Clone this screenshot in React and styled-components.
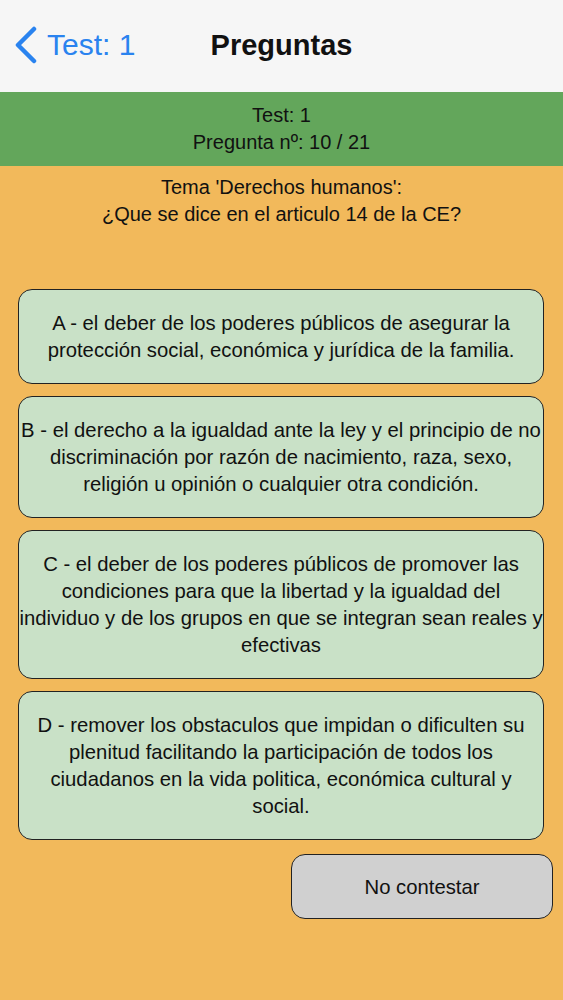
import React from "react";
import styled, { createGlobalStyle } from "styled-components";

const GlobalStyle = createGlobalStyle`
  html, body {
    margin: 0;
    padding: 0;
    background: #f2b95b;
  }
  body {
    font-family: "Liberation Sans", Arial, sans-serif;
    color: #111;
  }
`;

const answers = [
  [
    "A - el deber de los poderes públicos de asegurar la",
    "protección social, económica y jurídica de la familia.",
  ],
  [
    "B - el derecho a la igualdad ante la ley y el principio de no",
    "discriminación por razón de nacimiento, raza, sexo,",
    "religión u opinión o cualquier otra condición.",
  ],
  [
    "C - el deber de los poderes públicos de promover las",
    "condiciones para que la libertad y la igualdad del",
    "individuo y de los grupos en que se integran sean reales y",
    "efectivas",
  ],
  [
    "D - remover los obstaculos que impidan o dificulten su",
    "plenitud facilitando la participación de todos los",
    "ciudadanos en la vida politica, económica cultural y",
    "social.",
  ],
];

const Page = styled.div`
  width: 563px;
  min-height: 1000px;
  background: #f2b95b;
  display: flex;
  flex-direction: column;
`;

const NavBar = styled.header`
  height: 92px;
  background: #f6f6f6;
  display: grid;
  grid-template-columns: 1fr auto 1fr;
  align-items: center;
  padding-bottom: 2px;
  box-sizing: border-box;
`;

const BackButton = styled.button`
  justify-self: start;
  display: flex;
  align-items: center;
  gap: 10px;
  margin-left: 13px;
  padding: 0;
  border: none;
  background: none;
  color: #2a83ef;
  font-family: inherit;
  font-size: 30px;
  cursor: pointer;
  svg {
    display: block;
  }
`;

const Title = styled.h1`
  margin: 0;
  font-size: 29px;
  font-weight: 700;
  color: #111;
`;

const InfoBand = styled.div`
  background: #63a65b;
  padding: 10px 0;
  text-align: center;
  font-size: 20px;
  line-height: 27px;
`;

const Question = styled.p`
  margin: 0;
  padding: 8px 0 0;
  text-align: center;
  font-size: 20px;
  line-height: 27px;
`;

const AnswerList = styled.div`
  display: flex;
  flex-direction: column;
  gap: 12px;
  margin: 61px 19px 0 18px;
`;

const AnswerCard = styled.button`
  display: flex;
  flex-direction: column;
  align-items: center;
  background: #c9e1c7;
  border: 1.5px solid #222;
  border-radius: 14px;
  padding: 19.5px 0;
  font-family: inherit;
  font-size: 20.3px;
  line-height: 27px;
  color: #111;
  cursor: pointer;
`;

const Line = styled.span`
  white-space: nowrap;
`;

const Footer = styled.div`
  display: flex;
  justify-content: flex-end;
  margin: 14px 10px 0 0;
`;

const SkipButton = styled.button`
  width: 262px;
  height: 65px;
  background: #d0d0d0;
  border: 1.5px solid #222;
  border-radius: 14px;
  font-family: inherit;
  font-size: 20.3px;
  color: #111;
  padding-top: 3px;
  cursor: pointer;
`;

const Chevron = () => (
  <svg width="24" height="38" viewBox="0 0 24 38">
    <polyline
      points="21,3 5,19 21,35"
      fill="none"
      stroke="#2a83ef"
      strokeWidth="4.5"
      strokeLinecap="round"
      strokeLinejoin="round"
    />
  </svg>
);

export default function App() {
  return (
    <>
      <GlobalStyle />
      <Page>
        <NavBar>
          <BackButton>
            <Chevron />
            Test: 1
          </BackButton>
          <Title>Preguntas</Title>
          <div />
        </NavBar>
        <InfoBand>
          Test: 1
          <br />
          Pregunta nº: 10 / 21
        </InfoBand>
        <Question>
          Tema 'Derechos humanos':
          <br />
          ¿Que se dice en el articulo 14 de la CE?
        </Question>
        <AnswerList>
          {answers.map(lines => (
            <AnswerCard key={lines[0]}>
              {lines.map(l => (
                <Line key={l}>{l}</Line>
              ))}
            </AnswerCard>
          ))}
        </AnswerList>
        <Footer>
          <SkipButton>No contestar</SkipButton>
        </Footer>
      </Page>
    </>
  );
}
